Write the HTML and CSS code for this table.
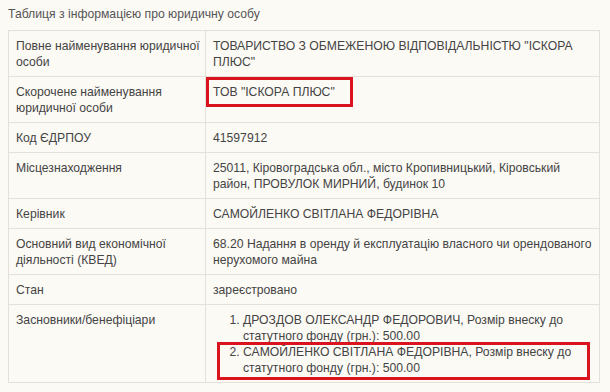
FILE: index.html
```html
<!DOCTYPE html>
<html lang="uk">
<head>
<meta charset="utf-8">
<link rel="stylesheet" href="styles.css">
</head>
<body>
<div class="caption">Таблиця з інформацією про юридичну особу</div>
<table class="info">
  <colgroup><col class="c1"><col class="c2"></colgroup>
  <tr><td>Повне найменування юридичної особи</td><td>ТОВАРИСТВО З ОБМЕЖЕНОЮ ВІДПОВІДАЛЬНІСТЮ "ІСКОРА ПЛЮС"</td></tr>
  <tr><td>Скорочене найменування юридичної особи</td><td class="rel"><span class="mark mark1"></span>ТОВ "ІСКОРА ПЛЮС"</td></tr>
  <tr><td>Код ЄДРПОУ</td><td>41597912</td></tr>
  <tr><td>Місцезнаходження</td><td>25011, Кіровоградська обл., місто Кропивницький, Кіровський район, ПРОВУЛОК МИРНИЙ, будинок 10</td></tr>
  <tr><td>Керівник</td><td>САМОЙЛЕНКО СВІТЛАНА ФЕДОРІВНА</td></tr>
  <tr><td>Основний вид економічної діяльності (КВЕД)</td><td>68.20 Надання в оренду й експлуатацію власного чи орендованого нерухомого майна</td></tr>
  <tr><td>Стан</td><td>зареєстровано</td></tr>
  <tr><td>Засновники/бенефіціари</td><td class="rel">
    <ol class="founders">
      <li>ДРОЗДОВ ОЛЕКСАНДР ФЕДОРОВИЧ, Розмір внеску до статутного фонду (грн.): 500.00</li>
      <li>САМОЙЛЕНКО СВІТЛАНА ФЕДОРІВНА, Розмір внеску до статутного фонду (грн.): 500.00</li>
    </ol>
    <span class="mark mark2"></span>
  </td></tr>
</table>
</body>
</html>
```
FILE: styles.css
```css
html, body {
  margin: 0;
  background: #fcfaf5;
}
body {
  padding: 6px 8px 0 8px;
  font-family: "Liberation Sans", Arial, sans-serif;
  font-size: 12.2px;
  line-height: 16px;
  color: #444;
}
.caption {
  color: #555;
  height: 16px;
  margin-bottom: 8px;
}
.info {
  border-collapse: collapse;
  width: 591px;
  table-layout: fixed;
}
.c1 { width: 197px; }
.c2 { width: 394px; }
.info td {
  border: 1px solid #e4e1da;
  padding: 7px 6px 6px 7px;
  vertical-align: top;
}
.info td:first-child {
  padding-right: 1px;
}
.rel { position: relative; }
.founders {
  margin: 0;
  padding-left: 30px;
}
.mark {
  position: absolute;
  border: 3px solid #d9141f;
  box-sizing: border-box;
}
.mark1 {
  left: 0;
  top: 0;
  width: 147px;
  height: 30px;
}
.mark2 {
  left: 11px;
  top: 37px;
  width: 373px;
  height: 38px;
}
```
